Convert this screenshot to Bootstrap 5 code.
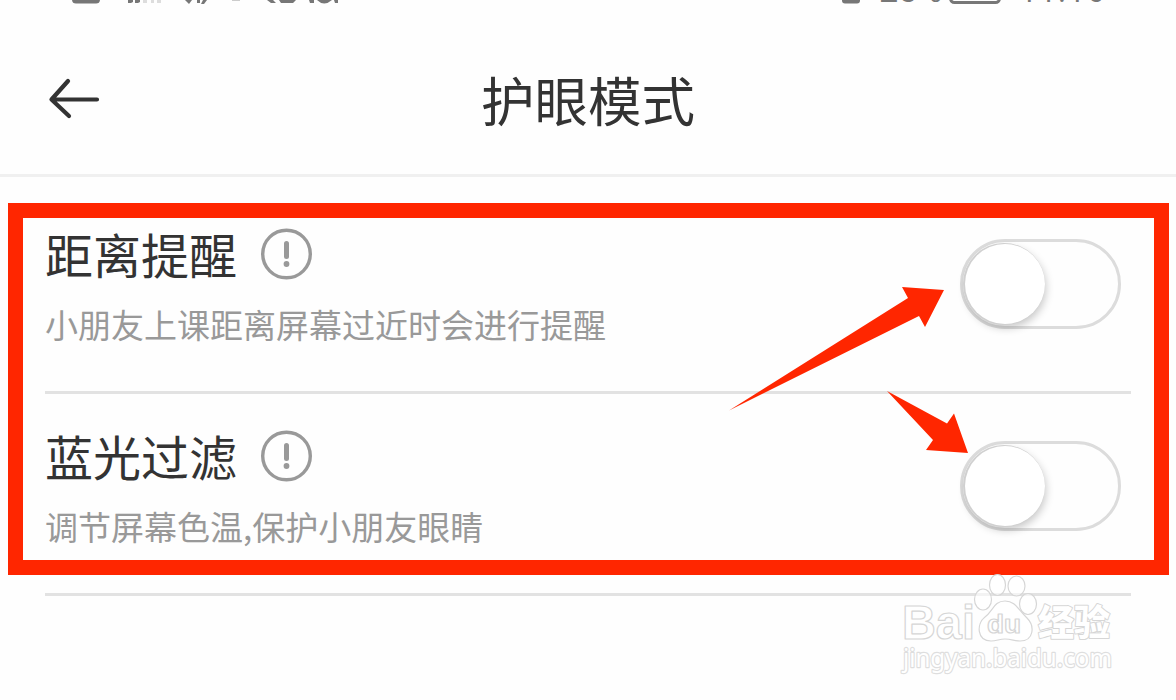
<!DOCTYPE html>
<html lang="zh-CN">
<head>
  <meta charset="UTF-8" />
  <meta name="viewport" content="width=device-width, initial-scale=1" />
  <title>护眼模式</title>
  <link href="https://cdn.jsdelivr.net/npm/bootstrap@5.3.3/dist/css/bootstrap.min.css" rel="stylesheet" />
  <style>
    body { font-family: "Noto Sans CJK SC", sans-serif; color: #333; background: #fefefe; }
    .screen { height: 700px; }
    .status-strip { height: 24px; }
    .top-bar { height: 153px; padding: 0 48px; border-bottom: 3px solid #f0f0f0; }
    .page-title { font-size: 53.5px; line-height: 80px; font-weight: 400; margin-top: 35px; }
    .back-btn { width: 52px; height: 44px; margin-top: 54px; }
    .side-space { width: 52px; }
    .settings { padding: 15px 45px 0; }
    .setting-row { height: 202px; padding: 25px 10px 0 0; border-bottom: 3px solid #e2e2e2; }
    .setting-name { font-size: 48px; line-height: 72px; font-weight: 400; }
    .name-line { gap: 23px; height: 72px; }
    .setting-note { font-size: 33px; line-height: 48px; color: #999; margin-top: 11px; }
    .info-icon { margin-top: 2px; }
    .toggle { width: 161px; height: 90px; margin-top: 22px; padding: 2px 0 0 2px; border: 3.5px solid #dcdcdc; border-radius: 45px; }
    .knob { width: 80px; height: 80px; border-radius: 50%; background: #fff; box-shadow: -1px 0 0 1px #d0d0d0, 1px 4px 9px rgba(0,0,0,.22); }
    .red-frame { left: 8px; top: 203px; width: 1161px; height: 372px; border: 15px solid #ff2600; }
    .overlay { left: 0; top: 0; }
  </style>
</head>
<body>
  <div class="screen position-relative overflow-hidden">

    <!-- status bar, scrolled almost out of view -->
    <svg class="status-strip d-block" width="1176" height="24" viewBox="0 0 1176 24" fill="#777">
      <rect x="72" y="-12" width="28" height="15.5" rx="4"/>
      <path d="M128 0h5v2l-2 1h-3zM135 0h5v2l-2 1h-3z"/>
      <path fill="#ddd" d="M143 0h4v3h-4zM151 0h3v3h-3zM157 0h4v3h-4z"/>
      <path d="M185 0h7l-3 4zM197 0h3v3h-3zM203 0h4l-3 4h-3z"/>
      <path fill="#ccc" d="M232 0h8v1h-8z"/>
      <path d="M267 0h6l3 3h-5zM279 0h17l-3 3h-12zM309 0h5v3h-4zM317 0h15q-8 7-15 0zM334 0h4v3h-3z"/>
      <rect x="842" y="-12" width="18" height="15.5" rx="3"/>
      <rect x="950.5" y="-20" width="49" height="22.5" rx="4" fill="none" stroke="#777" stroke-width="3"/>
      <g font-family="Roboto, sans-serif" font-size="30">
        <text x="879" y="2" textLength="63" lengthAdjust="spacingAndGlyphs">26%</text>
        <text x="1020" y="2" textLength="84">11:16</text>
      </g>
    </svg>

    <header class="top-bar d-flex justify-content-between align-items-start">
      <a class="back-btn" href="#" aria-label="返回">
        <svg class="d-block" width="52" height="44" viewBox="0 0 52 44" fill="none" stroke="#333" stroke-width="4.2" stroke-linecap="round" stroke-linejoin="round">
          <path d="M20 3L3.5 21.5L21 38M3.5 21.5H49"/>
        </svg>
      </a>
      <h1 class="page-title mb-0">护眼模式</h1>
      <div class="side-space"></div>
    </header>

    <main class="settings">
      <section class="setting-row d-flex justify-content-between align-items-start">
        <div>
          <div class="name-line d-flex align-items-center">
            <h2 class="setting-name mb-0">距离提醒</h2>
            <svg class="info-icon" width="52" height="52" viewBox="0 0 52 52">
              <circle cx="26.5" cy="26" r="23.8" fill="none" stroke="#999" stroke-width="3.4"/>
              <path d="M26.5 15.500v13" stroke="#999" stroke-width="5" stroke-linecap="round"/>
              <circle cx="26.5" cy="36" r="2.9" fill="#999"/>
            </svg>
          </div>
          <p class="setting-note mb-0">小朋友上课距离屏幕过近时会进行提醒</p>
        </div>
        <div class="toggle" role="switch" aria-checked="false"><div class="knob"></div></div>
      </section>

      <section class="setting-row d-flex justify-content-between align-items-start">
        <div>
          <div class="name-line d-flex align-items-center">
            <h2 class="setting-name mb-0">蓝光过滤</h2>
            <svg class="info-icon" width="52" height="52" viewBox="0 0 52 52">
              <circle cx="26.5" cy="26" r="23.8" fill="none" stroke="#999" stroke-width="3.4"/>
              <path d="M26.5 15.500v13" stroke="#999" stroke-width="5" stroke-linecap="round"/>
              <circle cx="26.5" cy="36" r="2.9" fill="#999"/>
            </svg>
          </div>
          <p class="setting-note mb-0">调节屏幕色温,保护小朋友眼睛</p>
        </div>
        <div class="toggle" role="switch" aria-checked="false"><div class="knob"></div></div>
      </section>
    </main>

    <!-- annotations over the page -->
    <div class="red-frame position-absolute pe-none"></div>
    <svg class="overlay position-absolute pe-none" width="1176" height="700" viewBox="0 0 1176 700">
      <g fill="#ff2600">
        <path d="M729 410.5L908 298L902 287L944 290L925 327L919 316Z"/>
        <path d="M887 391L947 423.5L954 413.5L968 453L926 450L933 440Z"/>
      </g>

      <!-- watermark -->
      <g fill="#fff" stroke="#d6d6d6" stroke-width="1.2" stroke-linejoin="round">
        <g fill-opacity=".6">
          <ellipse cx="983" cy="599.5" rx="8.5" ry="10.5"/>
          <ellipse cx="997.5" cy="585" rx="8" ry="10.5"/>
          <ellipse cx="1016.5" cy="586" rx="8.5" ry="10"/>
          <ellipse cx="1028" cy="604" rx="8.5" ry="10.5"/>
        </g>
        <path d="M1005 601C994 601 993 611 985 617C976 624 977 641 991 641C997 641 999 639 1005 639C1012 639 1014 641 1020 641C1034 641 1035 626 1027 618C1018 610 1016 601 1005 601Z"/>
        <g font-family="Liberation Sans, sans-serif" font-weight="700">
          <text x="902" y="639" font-size="48" textLength="73" lengthAdjust="spacingAndGlyphs">Bai</text>
          <text x="987" y="633" font-size="25" textLength="34" lengthAdjust="spacingAndGlyphs">du</text>
        </g>
        <text x="1038" y="636" font-family="Noto Sans CJK SC, sans-serif" font-weight="900" font-size="36" textLength="72" paint-order="stroke" stroke-width="2">经验</text>
        <text x="903" y="667" font-family="Noto Sans, sans-serif" font-size="25" textLength="209" lengthAdjust="spacingAndGlyphs" paint-order="stroke" stroke="#dedede" stroke-width="2.4">jingyan.baidu.com</text>
      </g>
    </svg>
  </div>

  <script src="https://cdn.jsdelivr.net/npm/bootstrap@5.3.3/dist/js/bootstrap.bundle.min.js"></script>
</body>
</html>
